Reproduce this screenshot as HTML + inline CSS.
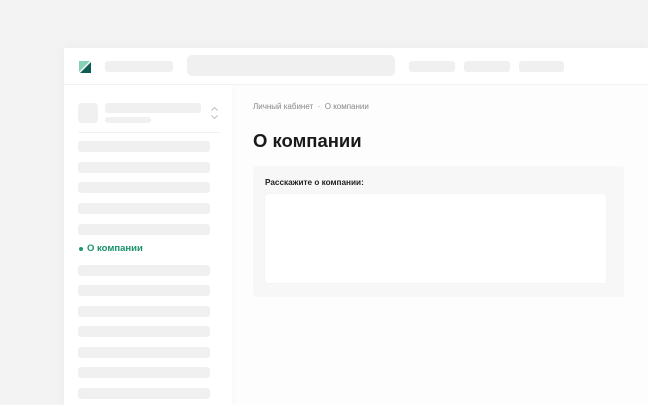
<!DOCTYPE html>
<html><head><meta charset="utf-8"><style>
*{margin:0;padding:0;box-sizing:border-box}
body{width:648px;height:405px;overflow:hidden;background:#f3f3f3;font-family:"Liberation Sans",sans-serif;position:relative}
.a{position:absolute}
.win{left:64px;top:48px;width:584px;height:357px;background:#fdfdfd;box-shadow:0 0 12px rgba(0,0,0,.04)}
.sk{position:absolute;background:#f0f0f0;border-radius:3px}
</style></head><body>
<div class="a win"></div>
<div class="a" style="left:64px;top:48px;width:584px;height:36px;background:#fff"></div>
<div class="a" style="left:64px;top:84px;width:584px;height:1px;background:#f2f2f2"></div>
<svg class="a" style="left:79px;top:61px" width="12" height="12" viewBox="0 0 12 12"><polygon points="0,0 11,0 0,11" fill="#86d1b5"/><polygon points="12,1 12,12 1,12" fill="#0f5d52"/></svg>
<div class="sk" style="left:105px;top:61px;width:68px;height:11px"></div>
<div class="sk" style="left:187px;top:55px;width:208px;height:21px;border-radius:5px"></div>
<div class="sk" style="left:409px;top:61px;width:46px;height:11px"></div>
<div class="sk" style="left:464px;top:61px;width:46px;height:11px"></div>
<div class="sk" style="left:519px;top:61px;width:45px;height:11px"></div>
<!-- sidebar -->
<div class="a" style="left:64px;top:85px;width:168px;height:320px;background:#fff;box-shadow:2px 0 6px rgba(0,0,0,.02)"></div>
<div class="sk" style="left:78px;top:103px;width:20px;height:20px;border-radius:4px"></div>
<div class="sk" style="left:105px;top:103px;width:96px;height:10px"></div>
<div class="sk" style="left:105px;top:117px;width:46px;height:6px"></div>
<svg class="a" style="left:210px;top:106px" width="9" height="14" viewBox="0 0 9 14"><path d="M1.5 4.5L4.5 1.5 7.5 4.5M1.5 9.5L4.5 12.5 7.5 9.5" fill="none" stroke="#bbb" stroke-width="0.9"/></svg>
<div class="a" style="left:78px;top:132px;width:142px;height:1px;background:#f0f0f0"></div>
<div class="sk" style="left:78px;top:141px;width:132px;height:11px"></div>
<div class="sk" style="left:78px;top:162px;width:132px;height:11px"></div>
<div class="sk" style="left:78px;top:182px;width:132px;height:11px"></div>
<div class="sk" style="left:78px;top:203px;width:132px;height:11px"></div>
<div class="sk" style="left:78px;top:224px;width:132px;height:11px"></div>
<div class="a" style="left:79px;top:247px;width:4px;height:4px;border-radius:50%;background:#1a9a6c"></div>
<div class="a" style="left:87px;top:243px;font-size:9.5px;font-weight:bold;color:#17936a">О компании</div>
<div class="sk" style="left:78px;top:265px;width:132px;height:11px"></div>
<div class="sk" style="left:78px;top:285px;width:132px;height:11px"></div>
<div class="sk" style="left:78px;top:306px;width:132px;height:11px"></div>
<div class="sk" style="left:78px;top:326px;width:132px;height:11px"></div>
<div class="sk" style="left:78px;top:347px;width:132px;height:11px"></div>
<div class="sk" style="left:78px;top:367px;width:132px;height:11px"></div>
<div class="sk" style="left:78px;top:388px;width:132px;height:11px"></div>
<!-- content -->
<div class="a" style="left:253px;top:102px;font-size:8px;color:#888">Личный кабинет &nbsp;·&nbsp; О компании</div>
<div class="a" style="left:253px;top:130px;font-size:18.5px;font-weight:bold;color:#1a1a1a">О компании</div>
<div class="a" style="left:253px;top:166px;width:371px;height:131px;background:#f7f7f7;border-radius:3px"></div>
<div class="a" style="left:265px;top:178px;font-size:8.2px;font-weight:bold;color:#222">Расскажите о компании:</div>
<div class="a" style="left:265px;top:194px;width:341px;height:89px;background:#fff;border-radius:3px;box-shadow:0 0 1px rgba(0,0,0,.1)"></div>
</body></html>
